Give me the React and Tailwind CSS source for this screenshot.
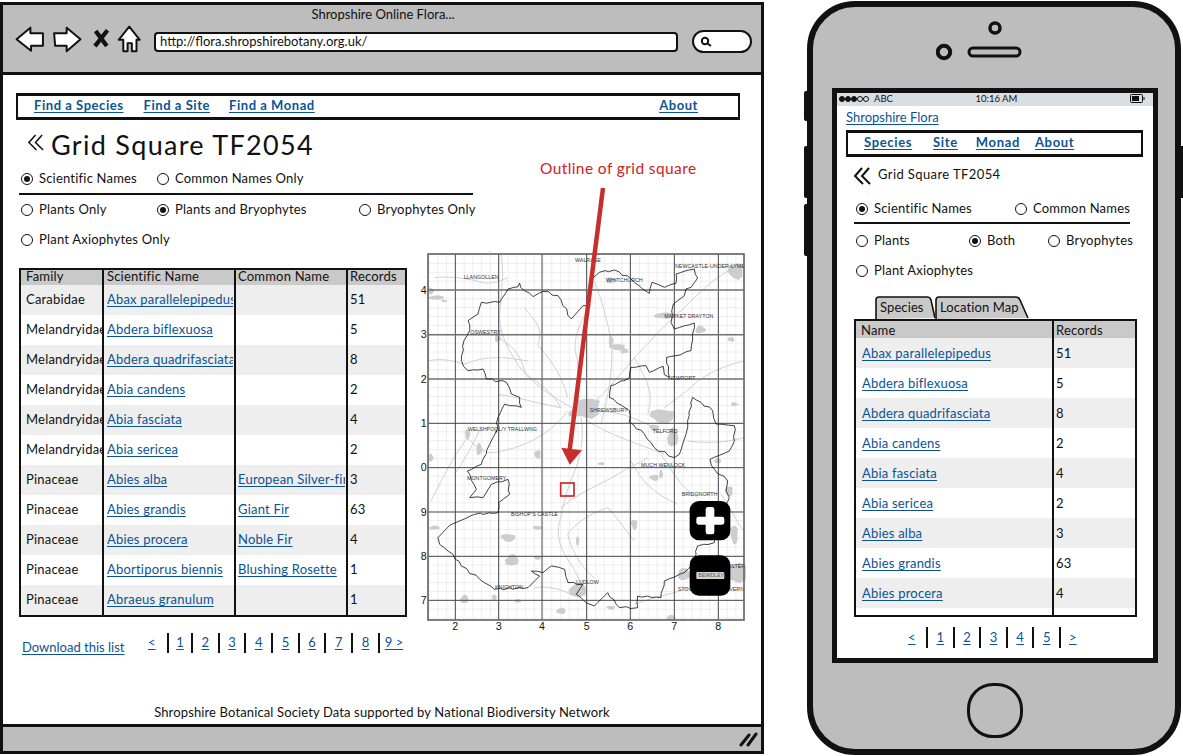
import React from "react";

const LINK = "text-[#0b5394] underline underline-offset-2 decoration-1";

const Radio = ({ on, label, className = "" }) => (
  <div className={`flex items-center gap-[6px] whitespace-nowrap tracking-[0.2px] ${className}`}>
    <span className="w-[12px] h-[12px] rounded-full border-[1.5px] border-[#111] flex items-center justify-center shrink-0">
      {on && <span className="w-[6px] h-[6px] rounded-full bg-[#111]" />}
    </span>
    <span>{label}</span>
  </div>
);

const rows = [
  ["Carabidae", "Abax parallelepipedus", "", "51"],
  ["Melandryidae", "Abdera biflexuosa", "", "5"],
  ["Melandryidae", "Abdera quadrifasciata", "", "8"],
  ["Melandryidae", "Abia candens", "", "2"],
  ["Melandryidae", "Abia fasciata", "", "4"],
  ["Melandryidae", "Abia sericea", "", "2"],
  ["Pinaceae", "Abies alba", "European Silver-fir", "3"],
  ["Pinaceae", "Abies grandis", "Giant Fir", "63"],
  ["Pinaceae", "Abies procera", "Noble Fir", "4"],
  ["Pinaceae", "Abortiporus biennis", "Blushing Rosette", "1"],
  ["Pinaceae", "Abraeus granulum", "", "1"],
];

const Chevrons = ({ className, sw = 2 }) => (
  <svg viewBox="0 0 18 18" className={className} fill="none" stroke="#111" strokeWidth={sw}>
    <path d="M9 1 L2 9 L10 17" />
    <path d="M16 1 L9 9 L17 17" />
  </svg>
);

const verticals = [103, 233, 363, 497, 628, 760, 892];
const horizontals = [147, 281, 414, 547, 680, 813, 946, 1078];

const shift = (dx, dy, pts) => pts.map(([x, y]) => [x + dx, y + dy]);
const outlinePts = [
  ...shift(21, 39, [[240,105],[270,98],[275,87],[278,100],[315,128],[345,112],[390,125],[430,195],[465,155],[478,155]]),
  ...shift(495, 39, [[12,80],[40,55],[85,48],[135,75],[170,105],[190,118],[198,85],[235,100],[270,88],[270,60],[300,50],[325,45],[335,72],[315,100],[300,105],[295,125],[262,150],[255,205],[265,225],[325,207],[315,290],[270,305],[242,310],[250,370],[235,362],[232,337],[190,355],[180,335],[135,340],[130,372],[75,395],[70,430],[130,470],[130,505],[175,540]]),
  ...shift(495, 570, [[205,50],[265,80],[280,70],[300,10]]),
  ...shift(495, 39, [[305,500],[320,430],[345,445],[380,470],[390,510],[445,515]]),
  ...shift(495, 570, [[445,30],[430,60],[372,85],[385,115],[425,150],[420,180],[430,200],[400,260],[385,335],[335,345],[320,400],[295,425],[235,450],[225,500],[155,495],[155,530],[100,530],[65,485],[25,525],[0,515]]),
  ...shift(21, 570, [[445,490],[465,460],[420,455],[410,415],[370,405],[345,425],[310,420],[335,435],[300,470],[200,475],[155,445],[100,405],[75,370],[35,340],[30,320],[65,283],[140,250],[210,245],[212,215],[245,190],[240,145],[190,160],[165,200],[125,200],[145,175],[118,120],[160,100],[185,40],[205,0]]),
  ...shift(21, 39, [[205,535],[210,490],[230,450],[280,460],[275,430],[250,420],[235,385],[175,375],[165,345],[120,350],[100,320],[108,260],[125,230],[120,200],[150,180],[160,145],[215,145]]),
];

const crinkle = (pts) => {
  let d = "";
  pts.forEach(([x, y], i) => {
    const [nx, ny] = pts[(i + 1) % pts.length];
    d += `${i ? "L" : "M"}${x} ${y} `;
    const len = Math.hypot(nx - x, ny - y);
    const n = Math.floor(len / 14);
    for (let k = 1; k < n; k++) {
      const t = k / n;
      const j = Math.sin(i * 7.3 + k * 2.9) * 2.8;
      d += `L${(x + (nx - x) * t + j).toFixed(1)} ${(y + (ny - y) * t - j).toFixed(1)} `;
    }
  });
  return d + "Z";
};
const outline = crinkle(outlinePts);

const roads = [
  "M510 190 C470 260 450 300 470 360 C470 430 470 480 480 530 C490 580 480 640 465 680 C440 740 425 790 420 830 C400 880 420 930 450 970 C470 1000 480 1030 490 1050",
  "M490 510 C540 470 590 410 640 350 C680 310 740 240 790 200 C840 150 880 110 940 80",
  "M490 520 C560 500 620 520 700 560",
  "M500 540 C580 590 660 610 730 640",
  "M470 510 C400 470 330 430 290 370 C260 320 240 290 235 230 C240 170 250 90 240 40",
  "M440 510 C380 590 300 620 220 635 C180 640 150 600 140 590 C100 640 60 720 30 780",
  "M420 800 C480 750 540 730 590 700 C620 680 650 670 680 650",
  "M560 800 C500 820 460 850 440 880 C450 930 490 990 520 1010",
  "M20 360 C60 350 100 360 130 370 C200 340 260 350 320 360",
  "M40 110 C80 105 120 110 160 118 C190 130 220 130 260 110",
  "M310 200 C340 240 370 260 350 310 C380 350 420 390 440 470",
  "M230 290 C270 310 300 340 310 390 C340 430 370 420 420 500",
  "M180 560 C150 620 130 660 100 700",
  "M230 460 C300 470 360 490 420 500",
  "M640 350 C680 420 700 460 680 520",
  "M830 420 C800 450 770 470 730 500",
  "M830 420 C890 380 930 370 969 360",
  "M720 640 C760 700 780 740 830 770",
  "M800 600 C880 610 930 600 969 590",
  "M540 550 C560 470 580 380 570 300 C560 240 540 170 520 120",
  "M640 900 C600 850 590 830 560 800",
  "M630 660 C660 720 700 760 770 790",
  "M900 760 C930 800 950 850 969 870",
  "M640 1090 C720 1060 760 1060 800 1040",
  "M340 1040 C400 1030 450 1060 470 1070",
];
const blobs = [
  [500, 500, 42, 32], [470, 515, 30, 14], [725, 525, 40, 22], [755, 590, 16, 30], [700, 560, 16, 10], [470, 1048, 26, 22],
  [140, 580, 9, 16], [728, 224, 28, 10], [570, 118, 18, 9], [945, 995, 34, 32], [790, 1000, 22, 18],
  [945, 90, 24, 26], [838, 266, 16, 12], [590, 318, 26, 10], [610, 330, 12, 8], [262, 890, 24, 12], [272, 958, 20, 18],
  [350, 860, 16, 6], [45, 170, 24, 7], [30, 150, 10, 10], [930, 295, 10, 8], [940, 490, 12, 6], [350, 640, 10, 14],
  [175, 625, 10, 18], [925, 750, 12, 16], [230, 290, 9, 14], [640, 850, 10, 16], [40, 860, 16, 6], [350, 950, 12, 6],
  [130, 1075, 12, 14], [220, 1070, 8, 10], [420, 1110, 14, 10], [570, 300, 8, 16], [205, 25, 8, 8], [30, 650, 8, 12],
  [700, 710, 14, 10], [720, 700, 6, 14], [940, 880, 12, 30], [750, 1130, 14, 8], [570, 1100, 14, 6], [290, 1080, 10, 6],
  [70, 180, 10, 4], [890, 660, 10, 8], [470, 900, 6, 14], [540, 668, 10, 5],
];
const blobPath = ([x, y, a, b], s) => {
  let d = "";
  for (let i = 0; i < 10; i++) {
    const ang = (i / 10) * Math.PI * 2;
    const r = 0.72 + 0.38 * Math.abs(Math.sin(i * 2.3 + s * 1.7));
    d += `${i ? "L" : "M"}${(x + Math.cos(ang) * a * r).toFixed(1)} ${(y + Math.sin(ang) * b * r).toFixed(1)} `;
  }
  return d + "Z";
};
const labels = [
  ["WALRASE", 462, 62], ["LLANGOLLEN", 128, 114], ["WHITCHURCH", 555, 124], ["NEWCASTLE-UNDER-LYME", 762, 82],
  ["MARKET DRAYTON", 730, 230], ["OSWESTRY", 148, 279], ["NEWPORT", 742, 418], ["SHREWSBURY", 506, 514],
  ["TELFORD", 695, 576], ["WELSHPOOL/Y TRALLWNG", 140, 570], ["MUCH WENLOCK", 660, 678], ["MONTGOMERY", 138, 717],
  ["BISHOP'S CASTLE", 270, 824], ["BRIDGNORTH", 782, 764], ["LUDLOW", 465, 1028], ["KNIGHTON", 222, 1043],
  ["STOURPORT-ON-SEVERN", 770, 1050], ["KIDDERMINSTER", 840, 980],
];

const fineV = [];
for (let x = 103 - 26.3 * 3; x < 969; x += 26.3) if (x > 21) fineV.push(x);
const fineH = [];
for (let y = 147 - 26.6 * 4; y < 1137; y += 26.6) if (y > 39) fineH.push(y);

const ShropshireMap = () => (
  <svg viewBox="-6 30 990 1140" className="w-[330px] h-[380px] shrink-0 block">
    <rect x="21" y="39" width="948" height="1098" fill="#fff" />
    {fineV.map((x) => (
      <line key={x} x1={x} x2={x} y1="39" y2="1137" stroke="#e6e6e6" strokeWidth="2" />
    ))}
    {fineH.map((y) => (
      <line key={y} x1="21" x2="969" y1={y} y2={y} stroke="#e6e6e6" strokeWidth="2" />
    ))}
    {blobs.map((b, i) => (
      <path key={i} d={blobPath(b, i)} fill="#cdcdcd" />
    ))}
    {roads.map((d, i) => (
      <path key={i} d={d} fill="none" stroke="#cccccc" strokeWidth="2.8" />
    ))}
    {verticals.map((x) => (
      <line key={x} x1={x} x2={x} y1="39" y2="1137" stroke="#4a4a4a" strokeWidth="3" />
    ))}
    {horizontals.map((y, i) => (
      <line key={y} x1="21" x2="969" y1={y} y2={y} stroke={i < 3 ? "#707070" : "#4a4a4a"} strokeWidth={i < 3 ? 4.5 : 3} />
    ))}
    <path d={outline} fill="none" stroke="#111" strokeWidth="2.4" strokeLinejoin="round" />
    {labels.map(([t, x, y]) => (
      <text key={t} x={x} y={y} fontSize="16" fill="#333" fontFamily="'Liberation Sans', sans-serif">{t}</text>
    ))}
    <rect x="21" y="39" width="948" height="1098" fill="none" stroke="#666" strokeWidth="5" />
    {["4", "3", "2", "1", "0", "9", "8", "7"].map((t, i) => (
      <text key={i} x="8" y={horizontals[i] + 11} fontSize="32" textAnchor="middle" fill="#111" fontFamily="'Liberation Sans', sans-serif">{t}</text>
    ))}
    {["2", "3", "4", "5", "6", "7", "8"].map((t, i) => (
      <text key={i} x={verticals[i]} y="1168" fontSize="32" textAnchor="middle" fill="#111" fontFamily="'Liberation Sans', sans-serif">{t}</text>
    ))}
    <rect x="419" y="726" width="40" height="39" fill="none" stroke="#c62828" strokeWidth="5" />
    <rect x="806" y="780" width="122" height="118" rx="28" fill="#000" />
    <rect x="854" y="798" width="26" height="82" rx="7" fill="#fff" />
    <rect x="826" y="827" width="84" height="24" rx="7" fill="#fff" />
    <rect x="806" y="943" width="122" height="121" rx="28" fill="#000" />
    <rect x="826" y="993" width="84" height="21" rx="3" fill="#d4d4d4" />
    <text x="832" y="1009" fontSize="16" fill="#555" fontFamily="'Liberation Sans', sans-serif">BEWDLEY</text>
  </svg>
);

const Cell = ({ className, children }) => (
  <div className={`h-full flex items-center border-r-2 border-[#111] ${className}`}>
    <div className="w-full overflow-hidden whitespace-nowrap leading-[20px] mb-[2px]">{children}</div>
  </div>
);

const DesktopTable = () => (
  <div className="w-[388px] h-[349px] border-[2px] border-[#111] box-border overflow-hidden tracking-[0.2px]">
    <div className="flex h-[15px] bg-[#c9c9c9] leading-[13px]">
      <div className="w-[83px] pl-[5px] border-r-2 border-[#111]">Family</div>
      <div className="w-[132px] pl-[3px] border-r-2 border-[#111]">Scientific Name</div>
      <div className="w-[112px] pl-[2px] border-r-2 border-[#111]">Common Name</div>
      <div className="flex-1 pl-[2px] overflow-hidden whitespace-nowrap">Records</div>
    </div>
    {rows.map((r, i) => (
      <div key={r[1]} className={`flex h-[30px] items-center ${i % 2 === 0 ? "bg-[#eeeeee]" : "bg-white"}`}>
        <Cell className="w-[83px] pl-[5px]">{r[0]}</Cell>
        <Cell className="w-[132px] pl-[3px] pr-[1px]"><span className={LINK}>{r[1]}</span></Cell>
        <Cell className="w-[112px] pl-[2px] pr-[1px]"><span className={LINK}>{r[2]}</span></Cell>
        <div className="flex-1 pl-[2px]">{r[3]}</div>
      </div>
    ))}
  </div>
);

const Browser = () => (
  <div className="relative mt-[2px] w-[764px] h-[752px] border-[3px] border-[#111] flex flex-col box-border shrink-0">
    <div className="h-[70px] bg-[#bdbdbd] border-b-[3px] border-[#111] shrink-0 flex flex-col">
      <div className="h-[18px] text-center leading-[18px] pl-[2px]">Shropshire Online Flora...</div>
      <div className="flex items-center h-[30px] pl-[12px] pt-[1px]">
        <svg viewBox="45 70 385 85" className="w-[128px] h-[28px] shrink-0" fill="#fff" stroke="#111" strokeWidth="6" strokeLinejoin="round">
          <path d="M48 113 L90 78 L90 95 L128 95 L128 133 L92 133 L92 148 Z" />
          <path d="M162 95 L200 95 L200 78 L242 113 L200 150 L200 133 L165 133 Z" />
          <path d="M288 88 L322 134 M324 86 L286 134" stroke="#111" strokeWidth="13" fill="none" />
          <path d="M390 75 L358 115 L372 115 L372 150 L385 150 L385 125 L398 125 L398 150 L412 150 L412 115 L422 115 Z" />
        </svg>
        <div className="ml-[11px] mt-[6px] w-[524px] h-[20px] bg-white border-2 border-[#111] rounded-[4px] pl-[4px] leading-[15px] text-[13px]">http://flora.shropshirebotany.org.uk/</div>
        <div className="ml-[14px] mt-[6px] w-[60px] h-[23px] rounded-full bg-white border-2 border-[#111] flex items-center pl-[6px]">
          <svg viewBox="0 0 12 12" className="w-[12px] h-[12px]" fill="none" stroke="#111" strokeWidth="2"><circle cx="5" cy="5" r="3.2" /><path d="M7.5 7.5 L11 10" /></svg>
        </div>
      </div>
    </div>

    <div className="flex-1 flex flex-col pl-[13px] text-[13px] text-[#111]">
      <div className="mt-[18px] w-[724px] h-[27px] border-y-[3px] border-x-2 border-[#111] flex items-center pl-[16px] pb-[2px] font-bold tracking-[0.55px] shrink-0">
        <a className={`${LINK} mr-[20px]`}>Find a Species</a>
        <a className={`${LINK} mr-[19px]`}>Find a Site</a>
        <a className={LINK}>Find a Monad</a>
        <a className={`${LINK} ml-auto mr-[40px]`}>About</a>
      </div>
      <div className="h-[36px] mt-[7px] flex items-center text-[27px] tracking-[1.3px] pl-[11px]">
        <Chevrons className="w-[17px] h-[17px] mb-[6px]" sw={1.6} />
        <span className="ml-[7px]">Grid Square TF2054</span>
      </div>
      <div className="h-[20px] mt-[6px] flex items-center pl-[5px]">
        <Radio on label="Scientific Names" className="w-[136px]" />
        <Radio label="Common Names Only" />
      </div>
      <div className="h-[2px] bg-[#111] mt-[4px] ml-[3px] w-[454px]" />
      <div className="h-[20px] mt-[5px] flex items-center pl-[5px]">
        <Radio label="Plants Only" className="w-[136px]" />
        <Radio on label="Plants and Bryophytes" className="w-[202px]" />
        <Radio label="Bryophytes Only" />
      </div>
      <div className="h-[20px] mt-[10px] flex items-center pl-[5px]">
        <Radio label="Plant Axiophytes Only" />
      </div>
      <div className="flex items-start ml-[3px]">
        <div className="pt-[18px]"><DesktopTable /></div>
        <div className="ml-[12px] mt-[1px]"><ShropshireMap /></div>
      </div>
      <div className="flex items-end ml-[6px] mt-[2px] h-[21px]">
        <a className={`${LINK} w-[126px] leading-[14px]`}>Download this list</a>
        <div className="flex items-center h-[20px] mb-[1px]">
          <a className={`${LINK} w-[19px]`}>&lt;</a>
          <div className="w-[24px] h-full border-l-2 border-[#111] flex items-center justify-center"><a className={LINK}>1</a></div>
          {["2", "3", "4", "5", "6", "7", "8"].map((n) => (
            <div key={n} className="w-[26.7px] h-full border-l-2 border-[#111] flex items-center justify-center"><a className={LINK}>{n}</a></div>
          ))}
          <div className="h-full border-l-2 border-[#111] flex items-center pl-[5px]"><a className={LINK}>9 &gt;</a></div>
        </div>
      </div>
      <div className="mt-auto mb-[4px] text-center leading-[16px] -ml-[13px] tracking-[0.13px]">Shropshire Botanical Society Data supported by National Biodiversity Network</div>
    </div>

    <div className="h-[27px] bg-[#bdbdbd] border-t-[3px] border-[#111] shrink-0 flex items-center justify-end pr-[2px]">
      <svg viewBox="0 0 20 16" className="w-[20px] h-[16px]" stroke="#111" strokeWidth="3" strokeLinecap="round"><path d="M2 14 L10 4 M9 14 L17 3" /></svg>
    </div>

    <svg viewBox="0 0 764 752" className="absolute -left-[3px] -top-[5px] w-[764px] h-[752px] pointer-events-none">
      <path d="M603 188 L569 455" fill="none" stroke="#c62f2b" strokeWidth="4.5" />
      <path d="M563 449 L580 451 L570 463 Z" fill="#c62f2b" stroke="#c62f2b" strokeWidth="2" />
    </svg>
    <div className="absolute left-[537px] top-[153px] text-[15.5px] leading-[20px] tracking-[0.4px] text-[#d0211c] whitespace-nowrap">Outline of grid square</div>
  </div>
);

const mobileRows = [
  ["Abax parallelepipedus", "51"], ["Abdera biflexuosa", "5"], ["Abdera quadrifasciata", "8"],
  ["Abia candens", "2"], ["Abia fasciata", "4"], ["Abia sericea", "2"],
  ["Abies alba", "3"], ["Abies grandis", "63"], ["Abies procera", "4"],
];

const Tab = ({ label, w, d }) => (
  <div className="relative h-[23px] tracking-[0.1px]" style={{ width: w }}>
    <svg viewBox={`0 0 ${w} 23`} className="absolute inset-0 w-full h-full">
      <path d={d} fill="#c9c9c9" stroke="#111" strokeWidth="1.6" />
    </svg>
    <span className="relative block pl-[5px] leading-[22px]">{label}</span>
  </div>
);

const Phone = () => (
  <div className="relative ml-[43px] mt-[1px] w-[374px] h-[754px] shrink-0">
    <div className="absolute -left-[3px] top-[90px] w-[4px] h-[30px] bg-[#111] rounded-l-[2px]" />
    <div className="absolute -left-[3px] top-[145px] w-[4px] h-[52px] bg-[#111] rounded-l-[2px]" />
    <div className="absolute -left-[3px] top-[203px] w-[4px] h-[52px] bg-[#111] rounded-l-[2px]" />
    <div className="absolute -right-[2px] top-[145px] w-[3px] h-[52px] bg-[#111]" />
    <div className="w-full h-full bg-[#bdbdbd] border-[6px] border-[#111] rounded-[48px] flex flex-col items-center box-border">
      <svg viewBox="0 0 120 45" className="w-[120px] h-[45px] mt-[12px] ml-[4px] shrink-0">
        <circle cx="59" cy="9" r="5" fill="none" stroke="#111" strokeWidth="3.5" />
        <circle cx="8" cy="33" r="6.2" fill="none" stroke="#111" strokeWidth="4" />
        <rect x="33" y="29" width="51" height="8" rx="4" fill="none" stroke="#111" strokeWidth="3" />
      </svg>
      <div className="mt-[24px] ml-[2px] w-[326px] h-[575px] border-[5px] border-[#111] bg-white box-border shrink-0 flex flex-col text-[13px] text-[#111]">
        <div className="h-[13px] bg-[#d7dfe3] flex items-center relative shrink-0 text-[9.5px] leading-[11px] pl-[2px] pb-[2px]">
          <span className="flex items-center">
            {[1, 1, 1, 0, 0].map((f, i) => (
              <span key={i} className={`w-[6px] h-[6px] rounded-full border border-[#111] ${f ? "bg-[#111]" : ""}`} />
            ))}
          </span>
          <span className="ml-[5px]">ABC</span>
          <span className="mx-auto pr-[30px]">10:16 AM</span>
          <svg viewBox="0 0 15 9" className="w-[15px] h-[9px] mr-[8px]" fill="none" stroke="#111"><rect x="0.5" y="0.5" width="12" height="8" rx="1" /><rect x="2" y="2" width="7" height="5" fill="#111" stroke="none" /><path d="M14 3 V6" /></svg>
        </div>
        <a className={`${LINK} ml-[9px] mt-[3px] leading-[16px] w-fit`}>Shropshire Flora</a>
        <div className="ml-[9px] mt-[5px] w-[297px] h-[27px] border-y-[3px] border-x-2 border-[#111] flex items-center pl-[16px] pb-[1px] font-bold tracking-[0.65px] shrink-0">
          <a className={`${LINK} mr-[21px]`}>Species</a>
          <a className={`${LINK} mr-[18px]`}>Site</a>
          <a className={`${LINK} mr-[15px]`}>Monad</a>
          <a className={LINK}>About</a>
        </div>
        <div className="ml-[16px] mt-[10px] h-[19px] flex items-start shrink-0">
          <Chevrons className="w-[18px] h-[18px]" sw={2} />
          <span className="ml-[7px] leading-[15px] tracking-[0.4px]">Grid Square TF2054</span>
        </div>
        <div className="h-[20px] mt-[13px] flex items-center pl-[19px] shrink-0">
          <Radio on label="Scientific Names" className="w-[159px]" />
          <Radio label="Common Names" />
        </div>
        <div className="h-[2px] bg-[#111] mt-[3px] ml-[17px] w-[276px] shrink-0" />
        <div className="h-[20px] mt-[7px] flex items-center pl-[19px] shrink-0">
          <Radio label="Plants" className="w-[113px]" />
          <Radio on label="Both" className="w-[79px]" />
          <Radio label="Bryophytes" />
        </div>
        <div className="h-[20px] mt-[10px] flex items-center pl-[19px] shrink-0">
          <Radio label="Plant Axiophytes" />
        </div>
        <div className="flex ml-[38px] mt-[15px] shrink-0">
          <Tab label="Species" w={60} d="M1 23 V4 Q1 1 4 1 H52 Q55 1 56 4 L60 22" />
          <Tab label="Location Map" w={95} d="M1 23 V4 Q1 1 4 1 H80 Q84 1 85 4 L93 22" />
        </div>
        <div className="ml-[17px] w-[283px] h-[298px] border-[2px] border-[#111] box-border overflow-hidden shrink-0 flex flex-col tracking-[0.2px]">
          <div className="flex h-[17px] bg-[#c9c9c9] leading-[18px] shrink-0">
            <div className="w-[198px] pl-[5px] h-[17px] border-r-2 border-[#111]">Name</div>
            <div className="flex-1 pl-[2px]">Records</div>
          </div>
          {mobileRows.map((r, i) => (
            <div key={r[0]} className={`flex h-[30px] shrink-0 ${i % 2 === 0 ? "bg-[#eeeeee]" : "bg-white"}`}>
              <div className="w-[198px] h-full flex items-center pl-[6px] pt-[2px] border-r-2 border-[#111]"><a className={LINK}>{r[0]}</a></div>
              <div className="flex-1 h-full flex items-center pl-[2px] pt-[2px]">{r[1]}</div>
            </div>
          ))}
          <div className="flex-1 flex"><div className="w-[198px] border-r-2 border-[#111]" /></div>
        </div>
        <div className="flex justify-center items-center h-[21px] mt-[10px] pl-[3px] shrink-0">
          <a className={`${LINK} w-[18px]`}>&lt;</a>
          {["1", "2", "3", "4", "5"].map((n) => (
            <div key={n} className="w-[26.6px] h-full border-l-2 border-[#111] flex items-center justify-center"><a className={LINK}>{n}</a></div>
          ))}
          <div className="h-full border-l-2 border-[#111] flex items-center pl-[8px] w-[26px]"><a className={LINK}>&gt;</a></div>
        </div>
      </div>
      <div className="mt-[20px] ml-[2px] w-[56px] h-[55px] rounded-[26px] border-[3px] border-[#111] shrink-0" />
    </div>
  </div>
);

export default function App() {
  return (
    <div className="w-[1183px] h-[756px] bg-white overflow-hidden flex text-[13px] text-[#111]" style={{ fontFamily: "Lato, 'Noto Sans', sans-serif" }}>
      <Browser />
      <Phone />
    </div>
  );
}
